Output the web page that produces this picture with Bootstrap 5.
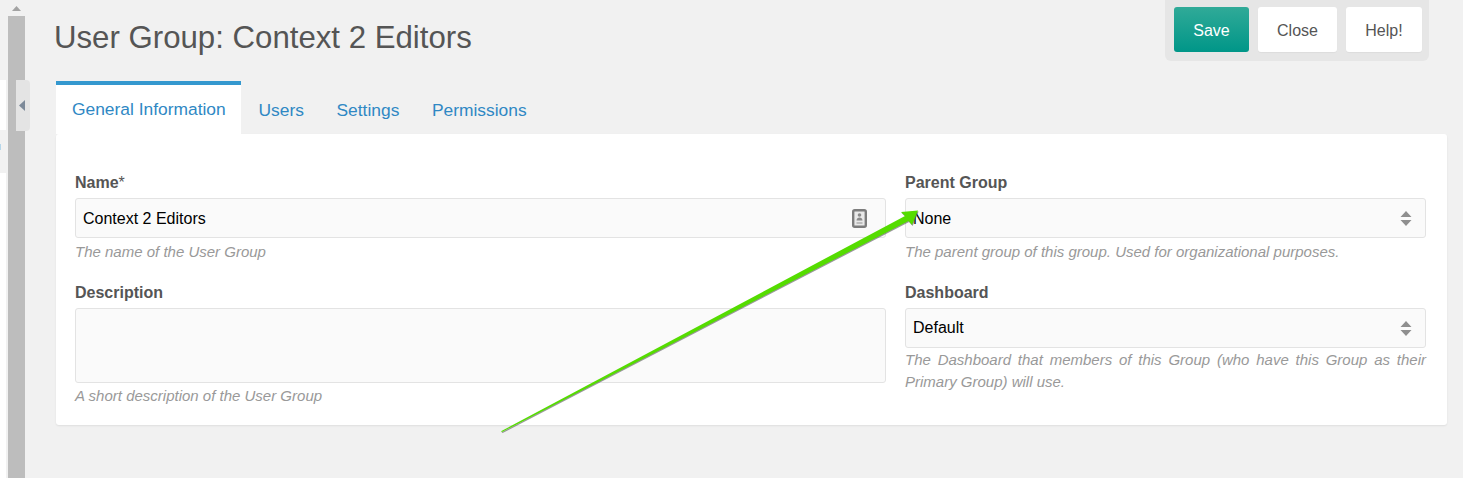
<!DOCTYPE html>
<html lang="en">
<head>
<meta charset="UTF-8">
<title>User Group: Context 2 Editors</title>
<link href="https://cdn.jsdelivr.net/npm/bootstrap@5.3.2/dist/css/bootstrap.min.css" rel="stylesheet">
<style>
html, body { height: 100%; overflow: hidden; }
body {
    background: #f1f1f1;
    color: #555;
    font-family: "Liberation Sans", Arial, sans-serif;
    font-size: 16px;
}
.page-wrap { height: 478px; }

/* left strip with the scrollbar */
.side-strip { width: 25px; flex: none; position: relative; }
.side-white { width: 8px; flex: none; }
.side-bar { width: 17px; flex: none; display: flex; flex-direction: column; }
.bar-arrow { height: 16px; display: flex; justify-content: center; align-items: center; }
.bar-thumb { flex: 1; background: #bdbdbd; }
.side-pale { position: absolute; left: 0; width: 6px; background: #fff; }
.pale-a { top: 80px; height: 50px; }
.pale-b { top: 173px; height: 305px; }
.pale-c { top: 144px; height: 6px; width: 1px; background: #b5d6ea; }
.collapse-tab {
    position: absolute; left: 16px; top: 80px; width: 14px; height: 51px;
    background: #e4e4e4; border-radius: 0 4px 4px 0;
    display: flex; align-items: center; padding-left: 3px;
}

.main-area { flex: 1; padding: 0 16px 0 31px; min-width: 0; position: relative; }
.title-row { height: 81px; margin-left: -2px; }
.page-title { font-size: 31.2px; font-weight: 400; color: #555; margin: 0; padding-top: 21px; line-height: 34px; }
.action-box {
    position: absolute; right: 34px; top: 0; background: #e6e6e6;
    border-radius: 0 0 6px 6px; padding: 7px 7px 9px 9px; display: flex; gap: 9px;
}
.btn-save, .btn-plain { height: 45px; font-size: 16px; border: 0; border-radius: 3px; padding: 2px 0 0; }
.btn-save { width: 75px; color: #fff; background: linear-gradient(#30aa98, #009688); }
.btn-save:hover { color: #fff; }
.btn-plain { background: #fff; color: #555; box-shadow: 0 1px 1px rgba(0,0,0,.04); }
.btn-close-w { width: 79px; }
.btn-help-w { width: 76px; }

.tab-strip { border: 0; height: 53px; }
.tab-strip .nav-link {
    border: 0; border-radius: 0; color: #2f88c4; font-size: 17.4px; line-height: 24px;
    padding: 17px 16.3px 12px; margin: 0; background: none;
}
.tab-strip .nav-item:first-child { margin-right: 1.5px; }
.tab-strip .nav-link.active {
    background: #fff; color: #2f88c4; border-top: 4px solid #3498cf;
    padding: 12px 15px 13px 16px; height: 53px;
}
.form-panel {
    background: #fff; border: 0; border-radius: 3px; height: 291px;
    box-shadow: 0 1px 2px rgba(0,0,0,.08); padding: 37px 19px 0 19px;
}
.form-grid { margin: 0; gap: 19px; flex-wrap: nowrap; }
.form-grid > div { padding: 0; }
.col-left { width: 811px; flex: none; }
.col-right { width: 521px; flex: none; }
.field-label { font-size: 16px; font-weight: 700; color: #555; line-height: 22px; margin: 1px 0 4px; display: block; }
.field-label span { font-weight: 400; }
.field-input {
    height: 40px; background: #fafafa; border: 1px solid #e3e3e3; border-radius: 3px;
    color: #000; font-size: 16px; padding: 2px 7px 0; display: flex; align-items: center;
    justify-content: space-between;
}
.field-input.input-high { padding-top: 0; }
.field-input.input-high .updown-icon { margin-top: 0; }
.field-area { height: 75px; background: #fafafa; border: 1px solid #e3e3e3; border-radius: 3px; }
.field-help { font-size: 15px; font-style: italic; color: #999; line-height: 22px; margin: 3px 0 0; }
.help-tight { margin-top: 2px; }
.help-just { text-align: justify; margin-top: 1px; }
.field-gap { margin-top: 19px; }
.name-icon { margin: -2px 11px 0 0; }
.updown-icon { margin: -2px 6px 0 0; }
.arrow-layer { position: absolute; left: 0; top: 0; pointer-events: none; }
</style>
</head>
<body>
<div class="page-wrap d-flex">
    <div class="side-strip d-flex">
        <div class="side-pale pale-a"></div>
        <div class="side-pale pale-c"></div>
        <div class="side-pale pale-b"></div>
        <div class="side-white"></div>
        <div class="side-bar">
            <div class="bar-arrow">
                <svg width="9" height="5" viewBox="0 0 9 5"><path d="M4.5 0 9 5H0z" fill="#a3a3a3"/></svg>
            </div>
            <div class="bar-thumb"></div>
        </div>
        <div class="collapse-tab">
            <svg width="6" height="11" viewBox="0 0 6 11"><path d="M6 0v11L0 5.5z" fill="#7d8a99"/></svg>
        </div>
    </div>

    <div class="main-area">
        <div class="title-row">
            <h1 class="page-title">User Group: Context 2 Editors</h1>
        </div>
        <div class="action-box">
            <button type="button" class="btn btn-save">Save</button>
            <button type="button" class="btn btn-plain btn-close-w">Close</button>
            <button type="button" class="btn btn-plain btn-help-w">Help!</button>
        </div>

        <ul class="nav nav-tabs tab-strip">
            <li class="nav-item"><a class="nav-link active" href="#">General Information</a></li>
            <li class="nav-item"><a class="nav-link" href="#">Users</a></li>
            <li class="nav-item"><a class="nav-link" href="#">Settings</a></li>
            <li class="nav-item"><a class="nav-link" href="#">Permissions</a></li>
        </ul>

        <div class="form-panel">
            <div class="row form-grid">
                <div class="col-left">
                    <label class="field-label">Name<span>*</span></label>
                    <div class="field-input">
                        <span>Context 2 Editors</span>
                        <svg class="name-icon" width="15" height="19" viewBox="0 0 15 19">
                            <rect x="1.2" y="1.2" width="12.6" height="16.6" rx="1.5" fill="#e9e9e9" stroke="#7d7d7d" stroke-width="2.4"/>
                            <circle cx="7.5" cy="6" r="1.8" fill="#8a8a8a"/>
                            <path d="M4.5 11.5c0-2 1.5-3 3-3s3 1 3 3z" fill="#8a8a8a"/>
                            <path d="M4.5 13h6v2h-6z" fill="#bdbdbd"/>
                        </svg>
                    </div>
                    <p class="field-help">The name of the User Group</p>
                    <label class="field-label field-gap">Description</label>
                    <div class="field-area"></div>
                    <p class="field-help help-tight">A short description of the User Group</p>
                </div>
                <div class="col-right">
                    <label class="field-label">Parent Group</label>
                    <div class="field-input">
                        <span>None</span>
                        <svg class="updown-icon" width="12" height="15" viewBox="0 0 12 15"><path d="M6 0l5.5 6H.5zM6 15 .5 9h11z" fill="#8f8f8f"/></svg>
                    </div>
                    <p class="field-help">The parent group of this group. Used for organizational purposes.</p>
                    <label class="field-label field-gap">Dashboard</label>
                    <div class="field-input input-high">
                        <span>Default</span>
                        <svg class="updown-icon" width="12" height="15" viewBox="0 0 12 15"><path d="M6 0l5.5 6H.5zM6 15 .5 9h11z" fill="#8f8f8f"/></svg>
                    </div>
                    <p class="field-help help-just">The Dashboard that members of this Group (who have this Group as their Primary Group) will use.</p>
                </div>
            </div>
        </div>
    </div>
</div>

<!-- green annotation arrow drawn over the page -->
<svg class="arrow-layer" width="1463" height="478" viewBox="0 0 1463 478">
    <path d="M501 431.3 905 216 901 212 918 210.5 912 225 908.5 221 502 432z" fill="#555" opacity=".6" transform="translate(.6 1)"/>
    <path d="M501 431.3 905 216 901 212 918 210.5 912 225 908.5 221 502 432z" fill="#55dc00"/>
</svg>
<script src="https://cdn.jsdelivr.net/npm/bootstrap@5.3.2/dist/js/bootstrap.bundle.min.js"></script>
</body>
</html>
